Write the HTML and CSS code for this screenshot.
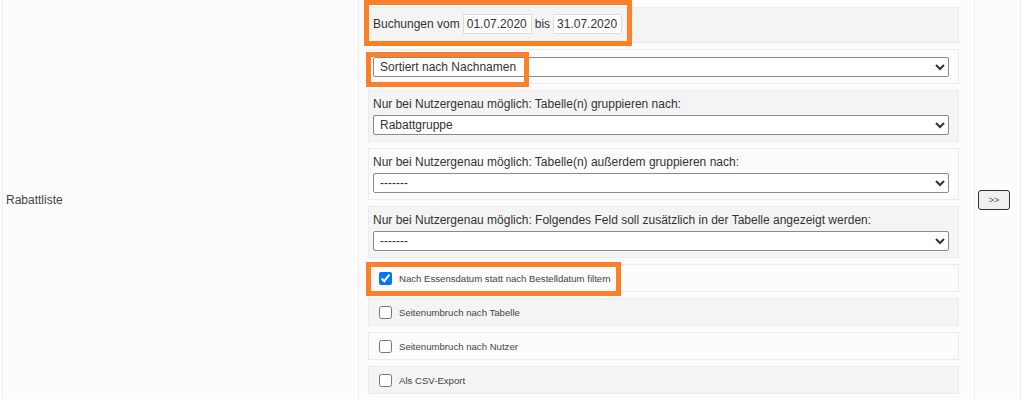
FILE: index.html
```html
<!DOCTYPE html>
<html lang="de">
<head>
<meta charset="utf-8">
<link rel="stylesheet" href="styles.css">
</head>
<body>
<div class="table">
  <div class="cell name">Rabattliste</div>
  <div class="cell options">
    <div class="box gray date">
      <span>Buchungen vom</span>
      <input class="dinput" type="text" value="01.07.2020">
      <span>bis</span>
      <input class="dinput" type="text" value="31.07.2020">
    </div>
    <div class="box light sortbox">
      <select class="sel"><option>Sortiert nach Nachnamen</option></select>
    </div>
    <div class="box gray">
      <div class="lbl">Nur bei Nutzergenau möglich: Tabelle(n) gruppieren nach:</div>
      <select class="sel"><option>Rabattgruppe</option></select>
    </div>
    <div class="box light">
      <div class="lbl">Nur bei Nutzergenau möglich: Tabelle(n) außerdem gruppieren nach:</div>
      <select class="sel"><option>-------</option></select>
    </div>
    <div class="box gray">
      <div class="lbl">Nur bei Nutzergenau möglich: Folgendes Feld soll zusätzlich in der Tabelle angezeigt werden:</div>
      <select class="sel"><option>-------</option></select>
    </div>
    <label class="box light check"><input type="checkbox" checked><span>Nach Essensdatum statt nach Bestelldatum filtern</span></label>
    <label class="box gray check"><input type="checkbox"><span>Seitenumbruch nach Tabelle</span></label>
    <label class="box light check"><input type="checkbox"><span>Seitenumbruch nach Nutzer</span></label>
    <label class="box gray check"><input type="checkbox"><span>Als CSV-Export</span></label>

    <div class="mark mark1"></div>
    <div class="mark mark2"></div>
    <div class="mark mark3"></div>
  </div>
  <div class="cell go"><button class="btn">&gt;&gt;</button></div>
</div>
</body>
</html>
```

FILE: styles.css
```css
html, body {
  margin: 0;
  padding: 0;
  background: #ffffff;
  font-family: "Liberation Sans", Arial, sans-serif;
  color: #333333;
  font-size: 12px;
}
.table {
  display: grid;
  grid-template-columns: 356px 616px 47px;
  margin-left: 2px;
  height: 399px;
  overflow: hidden;
}
.cell {
  background: #fcfcfc;
  border-left: 1px solid #eeeeee;
}
.cell.go {
  border-right: 1px solid #eeeeee;
  display: flex;
  align-items: center;
  padding-left: 3px;
}
.name {
  display: flex;
  align-items: center;
  padding-left: 3px;
  padding-top: 1px;
  font-size: 12px;
  color: #444;
}
.options {
  position: relative;
  padding: 7px 15px 0 9px;
  display: flex;
  flex-direction: column;
  gap: 6px;
}
.box {
  border: 1px solid #ebebeb;
  padding: 6px 9px 6px 4px;
  display: flex;
  flex-direction: column;
}
.gray { background: #f4f4f4; }
.light { background: #fcfcfc; }
.date {
  flex-direction: row;
  align-items: center;
  gap: 3px;
  padding-top: 6px;
  padding-bottom: 8px;
}
.sortbox {
  padding-top: 7px;
}
.dinput {
  width: 69px;
  height: 20px;
  box-sizing: border-box;
  border: 1px solid #dddddd;
  background: #fff;
  font-family: "Liberation Sans", Arial, sans-serif;
  font-size: 12px;
  color: #333;
  padding: 0 3px;
  margin: 0;
}
.sel {
  height: 20px;
  width: 100%;
  box-sizing: border-box;
  font-family: "Liberation Sans", Arial, sans-serif;
  font-size: 12px;
  color: #333;
  border: 1px solid #8a8a8a;
  border-radius: 2px;
  background: #fff;
  padding: 0 2px;
  margin: 0;
}
.lbl {
  line-height: 14px;
  margin: 0 0 4px 0;
}
.check {
  flex-direction: row;
  align-items: center;
  gap: 7px;
  height: 14px;
  padding: 6px 4px 6px 10px;
  font-size: 9.6px;
  color: #444;
}
.check input {
  width: 13px;
  height: 13px;
  margin: 0;
}
.btn {
  width: 32px;
  height: 20px;
  padding: 0;
  border: 1.5px solid #333;
  border-radius: 3px;
  background: #f0f0f0;
  font-family: "Liberation Sans", Arial, sans-serif;
  font-size: 9px;
  color: #555;
}
.mark {
  position: absolute;
  border: 5px solid #fd7f28;
  box-sizing: border-box;
}
.mark1 { left: 5px; top: 0; width: 268px; height: 46px; }
.mark2 { left: 7px; top: 52px; width: 163px; height: 35px; }
.mark3 { left: 7px; top: 262px; width: 255px; height: 34px; }
```
